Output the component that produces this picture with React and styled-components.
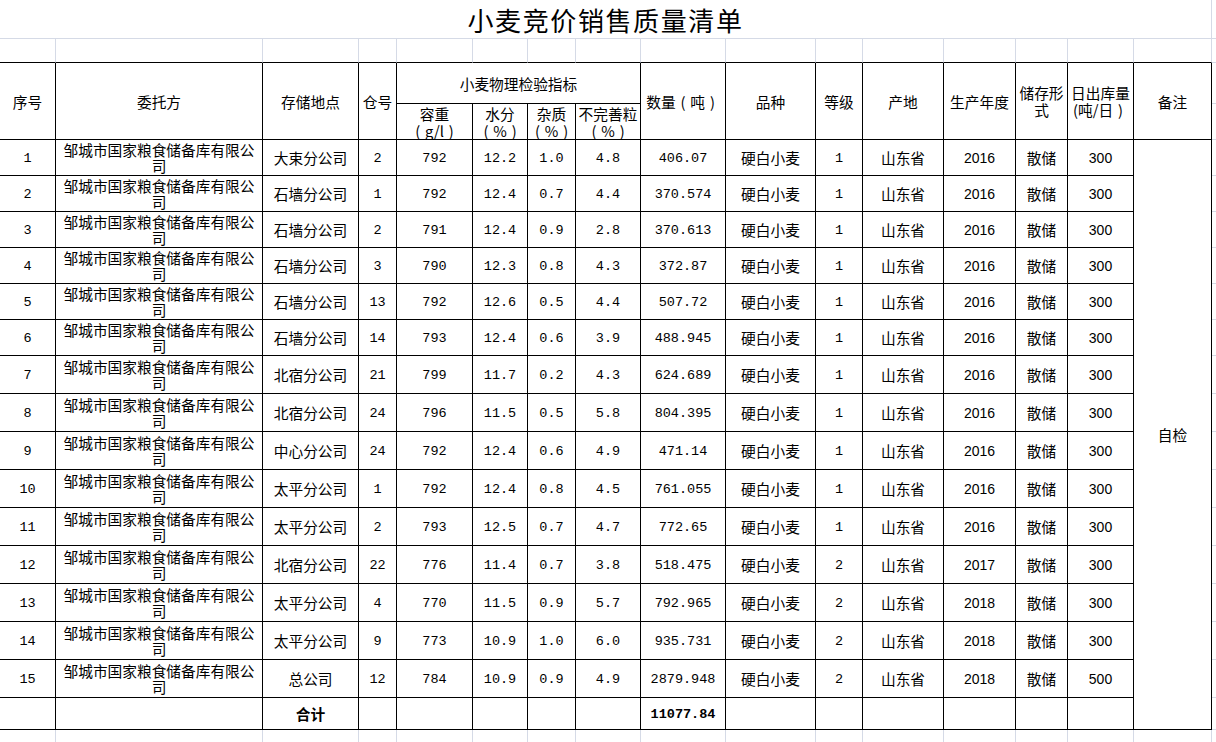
import React from "react";
import styled, { createGlobalStyle } from "styled-components";

const GRID = "#d5dae6";
const LINE = "#000";

const GlobalStyle = createGlobalStyle`
  html, body {
    margin: 0;
    padding: 0;
    background: #fff;
  }
  body {
    font-family: "Noto Sans CJK SC", "Liberation Sans", sans-serif;
    color: #000;
  }
`;

const Sheet = styled.table`
  table-layout: fixed;
  width: 1216px;
  border-collapse: separate;
  border-spacing: 0;
`;

const Row = styled.tr`
  height: ${(p) => p.$h}px;
`;

const Cell = styled.td`
  box-sizing: border-box;
  padding: 0 2px;
  text-align: center;
  vertical-align: middle;
  font-size: 14.7px;
  line-height: ${(p) => (p.$head ? 17 : 16)}px;
  font-weight: ${(p) => (p.$bold ? 700 : 400)};
  border-right: ${(p) => (p.$right === "none" ? "none" : `1px solid ${p.$right === "grid" ? GRID : LINE}`)};
  border-bottom: ${(p) => (p.$bottom === "none" ? "none" : `1px solid ${p.$bottom === "grid" ? GRID : LINE}`)};
  overflow: hidden;
`;

/* full-width bracket as the sheet's font draws it: ink centred in a full em */
const Paren = styled.span`
  display: inline-block;
  width: 1em;
  text-align: center;
`;

const Num = styled.span`
  font-family: "Liberation Mono", "DejaVu Sans Mono", monospace;
  font-size: 13.5px;
  font-weight: ${(p) => (p.$bold ? 700 : 400)};
`;

const Plain = styled.span`
  font-family: "Liberation Sans", Arial, sans-serif;
  font-size: 14px;
`;

const TitleCell = styled(Cell)`
  font-size: 26px;
  line-height: 30px;
  letter-spacing: 1.6px;
  padding-top: 2px;
`;

const GapCell = styled(Cell).attrs({ $right: "none", $bottom: "grid" })`
  padding: 0;
`;

const Unit = ({ children }) => (
  <>
    <Paren>(</Paren>
    {children}
    <Paren>)</Paren>
  </>
);

const widths = [56, 207, 96, 38, 76, 55, 48, 65, 85, 90, 47, 81, 72, 52, 66, 78, 4];

const rows = [
  ["大束分公司", "2", "792", "12.2", "1.0", "4.8", "406.07", "1", "2016", "300"],
  ["石墙分公司", "1", "792", "12.4", "0.7", "4.4", "370.574", "1", "2016", "300"],
  ["石墙分公司", "2", "791", "12.4", "0.9", "2.8", "370.613", "1", "2016", "300"],
  ["石墙分公司", "3", "790", "12.3", "0.8", "4.3", "372.87", "1", "2016", "300"],
  ["石墙分公司", "13", "792", "12.6", "0.5", "4.4", "507.72", "1", "2016", "300"],
  ["石墙分公司", "14", "793", "12.4", "0.6", "3.9", "488.945", "1", "2016", "300"],
  ["北宿分公司", "21", "799", "11.7", "0.2", "4.3", "624.689", "1", "2016", "300"],
  ["北宿分公司", "24", "796", "11.5", "0.5", "5.8", "804.395", "1", "2016", "300"],
  ["中心分公司", "24", "792", "12.4", "0.6", "4.9", "471.14", "1", "2016", "300"],
  ["太平分公司", "1", "792", "12.4", "0.8", "4.5", "761.055", "1", "2016", "300"],
  ["太平分公司", "2", "793", "12.5", "0.7", "4.7", "772.65", "1", "2016", "300"],
  ["北宿分公司", "22", "776", "11.4", "0.7", "3.8", "518.475", "2", "2017", "300"],
  ["太平分公司", "4", "770", "11.5", "0.9", "5.7", "792.965", "2", "2018", "300"],
  ["太平分公司", "9", "773", "10.9", "1.0", "6.0", "935.731", "2", "2018", "300"],
  ["总公司", "12", "784", "10.9", "0.9", "4.9", "2879.948", "2", "2018", "500"],
];

const App = () => {
  return (
    <>
      <GlobalStyle />
      <Sheet>
        <colgroup>
          {widths.map((w, i) => (
            <col key={i} style={{ width: w }} />
          ))}
        </colgroup>
        <tbody>
          <Row $h={39}>
            <TitleCell colSpan={16} $right="grid" $bottom="grid">
              小麦竞价销售质量清单
            </TitleCell>
            <GapCell />
          </Row>
          <Row $h={24}>
            {widths.slice(0, 16).map((_, i) => (
              <Cell key={i} $right="grid" />
            ))}
            <GapCell />
          </Row>
          <Row $h={41}>
            <Cell $head rowSpan={2}>序号</Cell>
            <Cell $head rowSpan={2}>委托方</Cell>
            <Cell $head rowSpan={2}>存储地点</Cell>
            <Cell $head rowSpan={2}>仓号</Cell>
            <Cell $head colSpan={4}>小麦物理检验指标</Cell>
            <Cell $head rowSpan={2}>
              数量<Unit>吨</Unit>
            </Cell>
            <Cell $head rowSpan={2}>品种</Cell>
            <Cell $head rowSpan={2}>等级</Cell>
            <Cell $head rowSpan={2}>产地</Cell>
            <Cell $head rowSpan={2}>生产年度</Cell>
            <Cell $head rowSpan={2}>
              储存形
              <br />式
            </Cell>
            <Cell $head rowSpan={2}>
              日出库量
              <br />
              (吨/日<Paren>)</Paren>
            </Cell>
            <Cell $head rowSpan={2}>备注</Cell>
            <GapCell />
          </Row>
          <Row $h={36}>
            <Cell $head>
              容重
              <br />
              <Unit>g/l</Unit>
            </Cell>
            <Cell $head>
              水分
              <br />
              <Unit>%</Unit>
            </Cell>
            <Cell $head>
              杂质
              <br />
              <Unit>%</Unit>
            </Cell>
            <Cell $head>
              不完善粒
              <br />
              <Unit>%</Unit>
            </Cell>
            <GapCell />
          </Row>
          {rows.map((r, i) => (
            <Row key={i} $h={i < 6 ? 36 : 38}>
              <Cell>
                <Num>{i + 1}</Num>
              </Cell>
              <Cell>邹城市国家粮食储备库有限公司</Cell>
              <Cell>{r[0]}</Cell>
              <Cell>
                <Num>{r[1]}</Num>
              </Cell>
              <Cell>
                <Num>{r[2]}</Num>
              </Cell>
              <Cell>
                <Num>{r[3]}</Num>
              </Cell>
              <Cell>
                <Num>{r[4]}</Num>
              </Cell>
              <Cell>
                <Num>{r[5]}</Num>
              </Cell>
              <Cell>
                <Num>{r[6]}</Num>
              </Cell>
              <Cell>硬白小麦</Cell>
              <Cell>
                <Num>{r[7]}</Num>
              </Cell>
              <Cell>山东省</Cell>
              <Cell>
                <Plain>{r[8]}</Plain>
              </Cell>
              <Cell>散储</Cell>
              <Cell>
                <Plain>{r[9]}</Plain>
              </Cell>
              {i === 0 && <Cell rowSpan={16}>自检</Cell>}
              <GapCell />
            </Row>
          ))}
          <Row $h={32}>
            <Cell />
            <Cell />
            <Cell $bold>合计</Cell>
            <Cell />
            <Cell />
            <Cell />
            <Cell />
            <Cell />
            <Cell>
              <Num $bold>11077.84</Num>
            </Cell>
            <Cell />
            <Cell />
            <Cell />
            <Cell />
            <Cell />
            <Cell />
            <GapCell />
          </Row>
          <Row $h={14}>
            {widths.slice(0, 16).map((_, i) => (
              <Cell key={i} $right="grid" $bottom="grid" />
            ))}
            <GapCell />
          </Row>
        </tbody>
      </Sheet>
    </>
  );
};

export default App;
